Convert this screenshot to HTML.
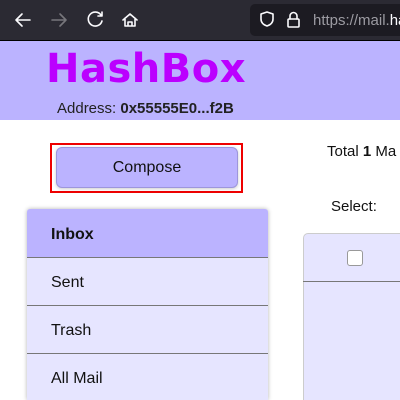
<!DOCTYPE html>
<html style="height:400px;overflow:hidden"><head><style>
body{margin:0;width:400px;height:400px;overflow:hidden;background:#fff;font-family:"Liberation Sans",sans-serif;position:relative}
div{position:absolute;box-sizing:border-box}
.t{font-size:16px;color:#111;white-space:nowrap}
</style></head><body>
<div style="left:0;top:0;width:400px;height:40px;background:#2b2a33"></div>
<div style="left:0;top:40px;width:400px;height:1px;background:#000"></div>
<div style="left:250px;top:4px;width:150px;height:32px;background:#1c1b22;border-radius:5px 0 0 5px"></div>
<svg style="position:absolute;left:0;top:0" width="400" height="40" fill="none" stroke-width="1.6" stroke-linecap="round" stroke-linejoin="round">
<path d="M30 20H16M22 14l-6 6 6 6" stroke="#fbfbfe"/>
<path d="M52 20h14M60 14l6 6-6 6" stroke="#77767c"/>
<path d="M101 15a7 7 0 1 0 1 6M102 12v4h-4" stroke="#fbfbfe"/>
<path d="M123 20l7-6 7 6M125 18v8h10v-8M128 26v-4h4v4" stroke="#fbfbfe"/>
<path d="M261 14l6-2 6 2v5c0 4-3 6-6 7-3-1-6-3-6-7z" stroke="#fbfbfe"/>
<rect x="288" y="19" width="11" height="8" rx="1" stroke="#fbfbfe"/>
<path d="M290 19v-3a3.5 3.5 0 0 1 7 0v3" stroke="#fbfbfe"/>
</svg>
<div class="t" style="left:313px;top:12px;font-size:15px;color:#9c9ba2">https://mail.<span style="color:#fbfbfe">ha</span></div>
<div style="left:0;top:41px;width:400px;height:79px;background:#bbb3ff"></div>
<div class="t" style="left:46px;top:46px;font-size:40px;font-weight:900;color:#bb00ff;letter-spacing:0.5px;font-family:'DejaVu Sans',sans-serif">HashBox</div>
<div class="t" style="left:57px;top:100px;font-size:15px;color:#222">Address: <b>0x55555E0...f2B</b></div>
<div style="left:50px;top:143px;width:193px;height:50px;border:2px solid #e00"></div>
<div style="left:56px;top:147px;width:182px;height:41px;background:#bbb3ff;border:1px solid #9d96dc;border-radius:6px;box-shadow:0 1px 3px rgba(0,0,0,.2)"></div>
<div class="t" style="left:56px;top:159px;width:182px;text-align:center">Compose</div>
<div class="t" style="left:327px;top:143px;font-size:15px">Total <b>1</b> Ma</div>
<div class="t" style="left:331px;top:198px;font-size:15px">Select:</div>
<div style="left:27px;top:209px;width:241px;height:191px;background:#e6e5ff;box-shadow:0 0 4px rgba(0,0,0,.3);border-radius:3px 3px 0 0"></div>
<div style="left:27px;top:209px;width:241px;height:49px;background:#bbb3ff;border-bottom:1px solid #777;border-radius:3px 3px 0 0"></div>
<div style="left:27px;top:305px;width:241px;height:1px;background:#777"></div>
<div style="left:27px;top:353px;width:241px;height:1px;background:#777"></div>
<div class="t" style="left:51px;top:226px;font-weight:bold">Inbox</div>
<div class="t" style="left:51px;top:274px">Sent</div>
<div class="t" style="left:51px;top:322px">Trash</div>
<div class="t" style="left:51px;top:370px">All Mail</div>
<div style="left:303px;top:233px;width:97px;height:167px;background:#e6e5ff;border:1px solid #ccc;border-right:none;border-bottom:none;border-radius:5px 0 0 0"></div>
<div style="left:303px;top:281px;width:97px;height:1px;background:#777"></div>
<div style="left:347px;top:250px;width:16px;height:16px;background:#fff;border:1px solid #999;border-radius:3px"></div>
</body></html>
